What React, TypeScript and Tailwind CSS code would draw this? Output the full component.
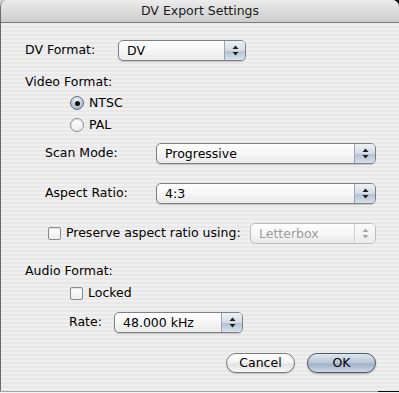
import React from "react";

const font = "font-['DejaVu_Sans',sans-serif]";

function Arrows({ disabled }: { disabled?: boolean }) {
    const c = disabled ? "#a8a8a8" : "#1c1c1c";
    return (
        <svg width="7" height="11" viewBox="0 0 7 11">
            <path d="M3.5 0.5 L6.5 4 L0.5 4 Z" fill={c} />
            <path d="M0.5 7 L6.5 7 L3.5 10.5 Z" fill={c} />
        </svg>
    );
}

function Popup({ value, className, disabled }: { value: string; className: string; disabled?: boolean }) {
    return (
        <div
            className={`flex h-[21px] overflow-hidden rounded-[5px] border ${disabled ? "border-[#bdbdbd] shadow-none" : "border-[#808080] shadow-[0_1px_1px_rgba(0,0,0,0.18)]"} bg-[linear-gradient(#ffffff,#f6f6f6_50%,#e9e9e9)] ${className}`}
        >
            <span className={`flex-1 truncate pl-[8px] text-[12.5px] leading-[19px] ${disabled ? "text-[#9c9c9c]" : "text-black"}`}>
                {value}
            </span>
            <span
                className={`flex w-[21px] items-center justify-center border-l ${disabled ? "border-[#d0d0d0] bg-[linear-gradient(#fbfbfb,#ececec)]" : "border-[#9aa6b5] bg-[linear-gradient(#eef2f7,#d4dce6_50%,#b3c1d2_52%,#d8e0ea)]"}`}
            >
                <Arrows disabled={disabled} />
            </span>
        </div>
    );
}

function Radio({ checked, label }: { checked?: boolean; label: string }) {
    return (
        <div className="flex h-[16px] items-center gap-[5px] pl-[45px]">
            <span
                className={`flex h-[14px] w-[14px] items-center justify-center rounded-full border ${checked ? "border-[#5e6c80] bg-[radial-gradient(circle_at_50%_30%,#f2f5f9,#aebccd_70%,#94a5bb)]" : "border-[#8c8c8c] bg-[linear-gradient(#ffffff,#ececec)] shadow-[inset_0_1px_1px_rgba(0,0,0,0.12)]"}`}
            >
                {checked && <span className="h-[5px] w-[5px] rounded-full bg-[#111]" />}
            </span>
            <span className="text-[12.5px] leading-[16px]">{label}</span>
        </div>
    );
}

function Check() {
    return (
        <span className="h-[13px] w-[13px] shrink-0 rounded-[2px] border border-[#8a8a8a] bg-[linear-gradient(#ffffff,#eeeeee)] shadow-[inset_0_1px_1px_rgba(0,0,0,0.12)]" />
    );
}

export default function App() {
    return (
        <div className={`h-[393px] w-[399px] bg-[linear-gradient(to_right,#cfcfcf_50%,#0d0d0d_50%)] ${font} text-black`}>
            <div className="flex h-[391px] flex-col overflow-hidden rounded-t-[7px] border-l border-[#6a6a6a] bg-[repeating-linear-gradient(#efefef_0px,#efefef_2px,#e8e8e8_2px,#e8e8e8_4px)]">
                {/* title bar */}
                <div className="flex h-[23px] shrink-0 items-center justify-center border-b border-[#7a7a7a] bg-[linear-gradient(#ececec,#dcdcdc_50%,#cdcdcd)] pb-[1px]">
                    <span className="text-[12.5px] leading-[16px] text-[#1a1a1a]">DV Export Settings</span>
                </div>

                <div className="flex flex-col pl-[24px] pt-[17px] text-[12.5px]">
                    <div className="flex items-center">
                        <span className="w-[93px]">DV Format:</span>
                        <Popup value="DV" className="w-[128px]" />
                    </div>

                    <div className="mt-[13px] h-[16px] leading-[16px]">Video Format:</div>
                    <div className="mt-[5px]">
                        <Radio checked label="NTSC" />
                    </div>
                    <div className="mt-[6px]">
                        <Radio label="PAL" />
                    </div>

                    <div className="mt-[10px] flex items-center pl-[20px]">
                        <span className="w-[111px]">Scan Mode:</span>
                        <Popup value="Progressive" className="w-[220px]" />
                    </div>

                    <div className="mt-[19px] flex items-center pl-[20px]">
                        <span className="w-[111px]">Aspect Ratio:</span>
                        <Popup value="4:3" className="w-[220px]" />
                    </div>

                    <div className="mt-[19px] flex items-center pl-[23px]">
                        <div className="flex w-[202px] items-center gap-[5px]">
                            <Check />
                            <span className="whitespace-nowrap">Preserve aspect ratio using:</span>
                        </div>
                        <Popup value="Letterbox" className="w-[126px]" disabled />
                    </div>

                    <div className="mt-[19px] h-[16px] leading-[16px]">Audio Format:</div>
                    <div className="mt-[6px] flex h-[16px] items-center gap-[5px] pl-[45px]">
                        <Check />
                        <span className="leading-[16px]">Locked</span>
                    </div>

                    <div className="mt-[11px] flex items-center pl-[44px]">
                        <span className="w-[45px]">Rate:</span>
                        <Popup value="48.000 kHz" className="w-[129px]" />
                    </div>

                    <div className="mt-[20px] flex justify-end gap-[12px] pr-[23px]">
                        <button className="h-[20px] w-[69px] rounded-full border border-[#7a7a7a] bg-[linear-gradient(#ffffff,#f3f3f3_50%,#e2e2e2_55%,#f7f7f7)] leading-[18px] shadow-[0_1px_1px_rgba(0,0,0,0.2)]">
                            Cancel
                        </button>
                        <button className="h-[20px] w-[69px] rounded-full border border-[#4d5a6c] bg-[linear-gradient(#dfe6ee,#b8c5d5_50%,#9fb1c7_55%,#cdd8e5)] leading-[18px] shadow-[0_1px_2px_rgba(0,0,0,0.3)]">
                            OK
                        </button>
                    </div>
                </div>
            </div>
            <div className="h-[1px] w-[378px] bg-[#a4a4a4]" />
            <div className="h-[1px] bg-[#f4f4f4]" />
        </div>
    );
}
